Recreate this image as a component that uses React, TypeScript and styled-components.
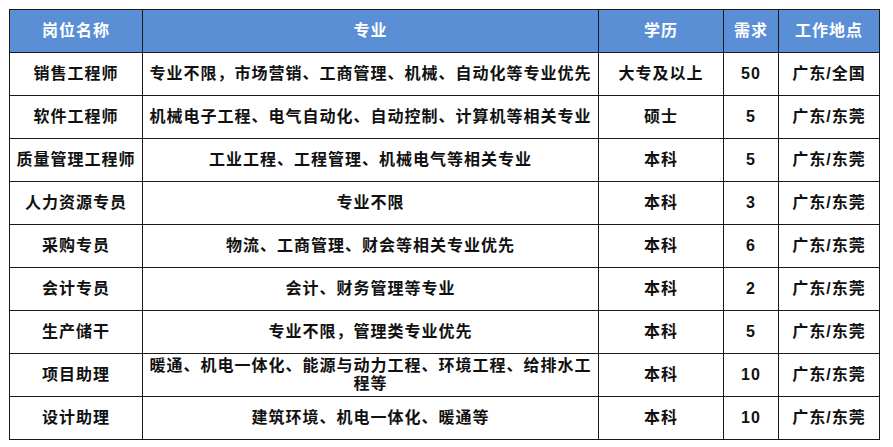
import styled, { createGlobalStyle } from "styled-components";

const GlobalStyle = createGlobalStyle`
  html, body {
    margin: 0;
    padding: 0;
    background: #ffffff;
  }
  body {
    font-family: "Liberation Sans", "Noto Sans CJK SC", sans-serif;
  }
`;

const columns = ["岗位名称", "专业", "学历", "需求", "工作地点"];

const jobs = [
  ["销售工程师", "专业不限，市场营销、工商管理、机械、自动化等专业优先", "大专及以上", "50", "广东/全国"],
  ["软件工程师", "机械电子工程、电气自动化、自动控制、计算机等相关专业", "硕士", "5", "广东/东莞"],
  ["质量管理工程师", "工业工程、工程管理、机械电气等相关专业", "本科", "5", "广东/东莞"],
  ["人力资源专员", "专业不限", "本科", "3", "广东/东莞"],
  ["采购专员", "物流、工商管理、财会等相关专业优先", "本科", "6", "广东/东莞"],
  ["会计专员", "会计、财务管理等专业", "本科", "2", "广东/东莞"],
  ["生产储干", "专业不限，管理类专业优先", "本科", "5", "广东/东莞"],
  ["项目助理", "暖通、机电一体化、能源与动力工程、环境工程、给排水工程等", "本科", "10", "广东/东莞"],
  ["设计助理", "建筑环境、机电一体化、暖通等", "本科", "10", "广东/东莞"],
];

const App = () => {
  return (
    <SPage>
      <GlobalStyle />
      <STable>
        {columns.map((title) => (
          <SCell key={title} $head>
            {title}
          </SCell>
        ))}
        {jobs.map((row) =>
          row.map((value, i) => (
            <SCell key={row[0] + i}>{value}</SCell>
          ))
        )}
      </STable>
    </SPage>
  );
};

export default App;

const SPage = styled.div`
  padding: 9px 0 0 9px;
`;

const STable = styled.div`
  display: grid;
  grid-template-columns: 133px 456px 125px 55px 101px;
  grid-auto-rows: 43px;
  width: max-content;
  border-left: 1px solid #1a1a1a;
  border-top: 1px solid #1a1a1a;
`;

const SCell = styled.div<{ $head?: boolean }>`
  display: flex;
  align-items: center;
  justify-content: center;
  box-sizing: border-box;
  padding: 0 5px;
  border-right: 1px solid #1a1a1a;
  border-bottom: 1px solid #1a1a1a;
  background: ${({ $head }) => ($head ? "#5a8fd6" : "#ffffff")};
  color: ${({ $head }) => ($head ? "#ffffff" : "#111111")};
  font-size: 16px;
  font-weight: 700;
  letter-spacing: 1px;
  line-height: 18px;
  text-align: center;
  white-space: normal;
`;
